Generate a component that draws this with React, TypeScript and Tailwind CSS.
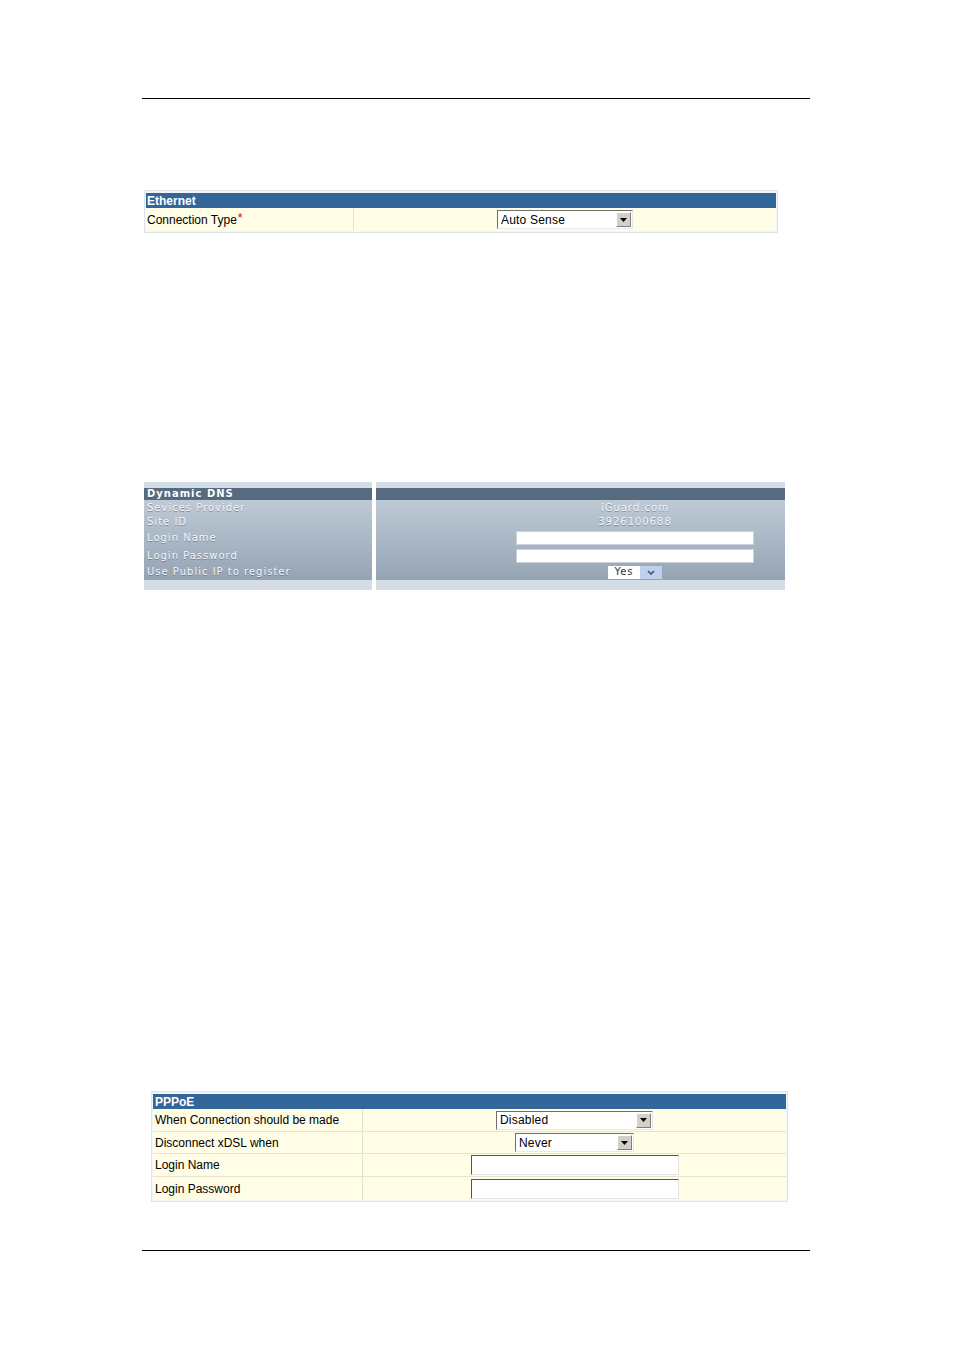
const cell = "font-['Liberation_Sans',Arial,sans-serif] text-[12px] leading-none text-black"

function XpSelect({ value, width }: { value: string; width: number }) {
  return (
    <div
      className="flex h-[19px] items-stretch border border-t-[#6f6f6f] border-l-[#6f6f6f] border-b-[#e8e8e8] border-r-[#e8e8e8] bg-white"
      style={{ width }}
    >
      <div className={`flex flex-1 items-center pl-[3px] tracking-[0.2px] ${cell}`}>{value}</div>
      <div className="m-[1px] flex w-[15px] items-center justify-center border border-t-white border-l-white border-b-[#808080] border-r-[#808080] bg-[#d4d0c8]">
        <svg width="7" height="4" viewBox="0 0 7 4">
          <path d="M0 0h7L3.5 4z" fill="#000" />
        </svg>
      </div>
    </div>
  )
}

function XpInput({ width }: { width: number }) {
  return (
    <div
      className="h-[20px] border border-t-[#555] border-l-[#555] border-b-[#e4e4e4] border-r-[#e4e4e4] bg-white"
      style={{ width }}
    />
  )
}

function Ethernet() {
  return (
    <div className="ml-[2px] w-[634px] border border-[#dce4ee] bg-[#f2f5f9] px-[1px] pt-[2px] pb-[1px]">
      <div className="flex h-[15px] items-center bg-[#336699] pl-[1px] font-['Liberation_Sans',Arial,sans-serif] text-[12px] font-bold text-white">
        Ethernet
      </div>
      <div className="flex h-[23px] bg-[#fffde6]">
        <div className={`flex w-[208px] items-center border-r border-[#e2e1d2] pl-[1px] ${cell}`}>
          Connection Type<span className="ml-[1px] -mt-[3px] text-[#d40000]">*</span>
        </div>
        <div className="flex flex-1 items-center justify-center">
          <XpSelect value="Auto Sense" width={136} />
        </div>
      </div>
    </div>
  )
}

const dnsText =
  "font-['DejaVu_Sans',Verdana,sans-serif] text-[10px] leading-none tracking-[1px] text-[#f4f6f9] [text-shadow:0_1px_0_rgba(60,75,95,0.45)]"

function DynamicDns() {
  const labels: [string, string][] = [
    ["Sevices Provider", "h-[14px]"],
    ["Site ID", "h-[14px]"],
    ["Login Name", "h-[18px]"],
    ["Login Password", "h-[17px]"],
    ["Use Public IP to register", "h-[16px]"],
  ]
  return (
    <div className="ml-[2px] flex w-[641px] gap-[4px]">
      {/* Labels */}
      <div className="flex w-[228px] flex-col bg-[#d4dce6] pt-[6px] pb-[10px]">
        <div className={`flex h-[12px] items-center bg-[#566b80] pl-[3px] font-bold ${dnsText} text-white`}>
          Dynamic DNS
        </div>
        <div className="flex flex-col bg-gradient-to-b from-[#bfcad6] to-[#95a3b3] pt-[1px]">
          {labels.map(([l, h]) => (
            <div key={l} className={`flex items-center pl-[3px] ${h} ${dnsText}`}>
              {l}
            </div>
          ))}
        </div>
      </div>

      {/* Values */}
      <div className="flex flex-1 flex-col bg-[#d4dce6] pt-[6px] pb-[10px]">
        <div className="h-[12px] bg-[#566b80]" />
        <div className="flex bg-gradient-to-b from-[#bfcad6] to-[#95a3b3] pt-[1px]">
          <div className="w-[140px]" />
          <div className="flex w-[238px] flex-col items-center">
            <div className={`flex h-[14px] items-center tracking-[0.5px] ${dnsText}`}>iGuard.com</div>
            <div className={`flex h-[14px] items-center ${dnsText}`}>3926100688</div>
            <div className="flex h-[18px] w-full items-center">
              <div className="h-[14px] w-full border border-[#c9d1db] bg-white" />
            </div>
            <div className="flex h-[17px] w-full items-center">
              <div className="h-[14px] w-full border border-[#c9d1db] bg-white" />
            </div>
            <div className="flex h-[16px] items-center">
              <div className="flex h-[13px] w-[54px]">
                <div className="flex flex-1 items-center justify-center bg-white font-['DejaVu_Sans',Verdana,sans-serif] text-[10px] leading-none tracking-[1px] text-[#333]">
                  Yes
                </div>
                <div className="flex w-[22px] items-center justify-center bg-[#bfd0ec]">
                  <svg width="8" height="5" viewBox="0 0 8 5">
                    <path d="M1 1l3 3 3-3" fill="none" stroke="#3a4f7a" strokeWidth="1.5" />
                  </svg>
                </div>
              </div>
            </div>
          </div>
        </div>
      </div>
    </div>
  )
}

function Pppoe() {
  const rows: { label: string; field: React.ReactNode; h: string }[] = [
    { label: "When Connection should be made", field: <XpSelect value="Disabled" width={157} />, h: "h-[23px]" },
    { label: "Disconnect xDSL when", field: <XpSelect value="Never" width={119} />, h: "h-[22px]" },
    { label: "Login Name", field: <XpInput width={208} />, h: "h-[23px]" },
    { label: "Login Password", field: <XpInput width={208} />, h: "h-[23px]" },
  ]
  return (
    <div className="ml-[9px] w-[637px] border border-[#dce4ee] bg-[#f2f5f9] px-[1px] pt-[2px] pb-[1px]">
      <div className="flex h-[15px] items-center bg-[#336699] pl-[2px] font-['Liberation_Sans',Arial,sans-serif] text-[12px] font-bold text-white">
        PPPoE
      </div>
      {rows.map((r, i) => (
        <div
          key={r.label}
          className={`flex ${r.h} bg-[#fffde6] ${i < rows.length - 1 ? "border-b border-[#e4e3d4]" : ""}`}
        >
          <div className={`flex w-[210px] items-center border-r border-[#e2e1d2] pl-[2px] ${cell}`}>
            {r.label}
          </div>
          <div className="flex flex-1 items-center justify-center">{r.field}</div>
        </div>
      ))}
    </div>
  )
}

export default function App() {
  return (
    <div className="min-h-[1350px] bg-white">
      <div className="ml-[142px] w-[668px] pt-[98px]">
        <div className="border-t border-black" />
        <div className="mt-[91px]">
          <Ethernet />
        </div>
        <div className="mt-[249px]">
          <DynamicDns />
        </div>
        <div className="mt-[501px]">
          <Pppoe />
        </div>
        <div className="mt-[48px] border-t border-black" />
      </div>
    </div>
  )
}
